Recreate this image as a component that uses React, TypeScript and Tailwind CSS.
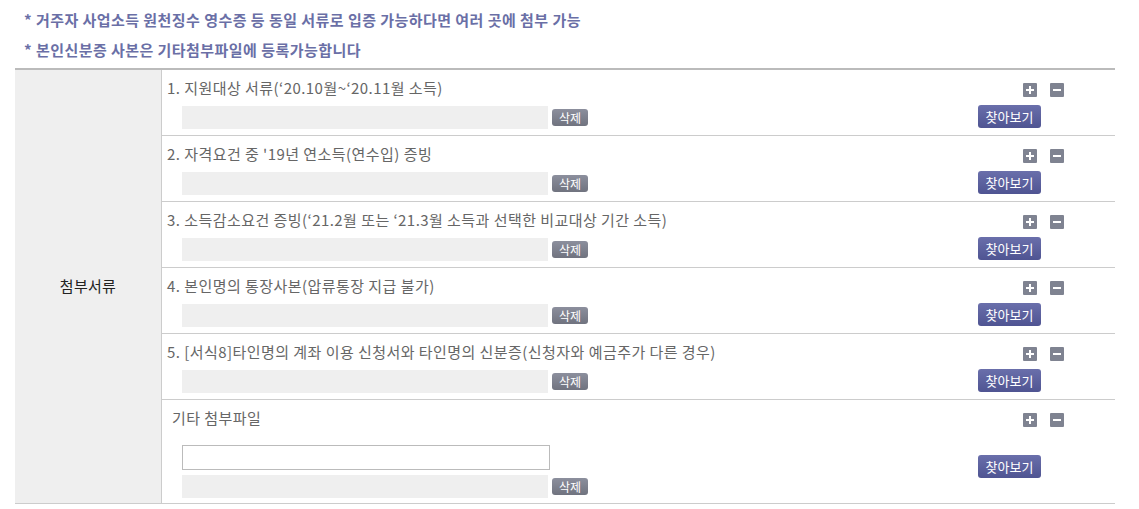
import React from "react";

const font = { fontFamily: '"Noto Sans CJK KR", "Noto Sans", sans-serif' };

function PlusMinus() {
  return (
    <div className="flex ml-[45px] gap-[13px]">
      <span className="relative w-[14px] h-[14px] bg-[#7f8391] rounded-[1px] block">
        <span className="absolute left-[3px] top-[6px] w-[8px] h-[2px] bg-white" />
        <span className="absolute left-[6px] top-[3px] w-[2px] h-[8px] bg-white" />
      </span>
      <span className="relative w-[14px] h-[14px] bg-[#7f8391] rounded-[1px] block">
        <span className="absolute left-[3px] top-[6px] w-[8px] h-[2px] bg-white" />
      </span>
    </div>
  );
}

function FindBtn({ className = "" }: { className?: string }) {
  return (
    <button
      className={`w-[63px] h-[23px] rounded-[3px] bg-gradient-to-b from-[#6a6fab] to-[#4f5492] text-white text-[13px] leading-[23px] text-center ${className}`}
    >
      찾아보기
    </button>
  );
}

function DelRow() {
  return (
    <div className="flex items-center ml-[15px]">
      <div className="w-[366px] h-[23px] bg-[#efefef]" />
      <button className="ml-[4px] w-[36px] h-[17px] rounded-[3px] bg-gradient-to-b from-[#8c8f9d] to-[#70737f] text-white text-[12px] leading-[17px] text-center">
        삭제
      </button>
    </div>
  );
}

const rows = [
  "1. 지원대상 서류(‘20.10월~‘20.11월 소득)",
  "2. 자격요건 중 '19년 연소득(연수입) 증빙",
  "3. 소득감소요건 증빙(‘21.2월 또는 ‘21.3월 소득과 선택한 비교대상 기간 소득)",
  "4. 본인명의 통장사본(압류통장 지급 불가)",
  "5. [서식8]타인명의 계좌 이용 신청서와 타인명의 신분증(신청자와 예금주가 다른 경우)",
];

export default function App() {
  return (
    <div className="w-[1139px] h-[509px] bg-white" style={font}>
      <div className="pt-[5px] pl-[24px] text-[15px] tracking-[0.45px] font-bold text-[#6a6fa6]">
        <div className="h-[30px] leading-[30px]">* 거주자 사업소득 원천징수 영수증 등 동일 서류로 입증 가능하다면 여러 곳에 첨부 가능</div>
        <div className="h-[30px] leading-[30px]">* 본인신분증 사본은 기타첨부파일에 등록가능합니다</div>
      </div>
      <div className="mt-[3px] ml-[15px] w-[1100px] border-t-2 border-[#bbbbbb] flex">
        <div className="w-[147px] bg-[#efefef] border-r border-[#cccccc] border-b flex items-center justify-center text-[15px] tracking-[0.3px] text-[#222]">
          첨부서류
        </div>
        <div className="flex-1">
          {rows.map((t) => (
            <div key={t} className="h-[66px] border-b border-[#cccccc] flex">
              <div className="flex-1 pl-[5px]">
                <div className="pt-[8px] h-[28px] leading-[20px] text-[15px] tracking-[0.45px] text-[#666]">{t}</div>
                <div className="mt-[8px]">
                  <DelRow />
                </div>
              </div>
              <div className="w-[137px] pt-[13px]">
                <PlusMinus />
                <FindBtn className="mt-[8px]" />
              </div>
            </div>
          ))}
          <div className="h-[104px] border-b border-[#cccccc] flex">
            <div className="flex-1 pl-[5px]">
              <div className="pt-[8px] h-[28px] leading-[20px] text-[15px] tracking-[0.45px] text-[#666] pl-[5px]">기타 첨부파일</div>
              <div className="ml-[15px] mt-[17px] w-[368px] h-[25px] border border-[#bbbbbb] bg-white" />
              <div className="mt-[5px]">
                <DelRow />
              </div>
            </div>
            <div className="w-[137px] pt-[13px]">
              <PlusMinus />
              <FindBtn className="mt-[28px]" />
            </div>
          </div>
        </div>
      </div>
    </div>
  );
}
